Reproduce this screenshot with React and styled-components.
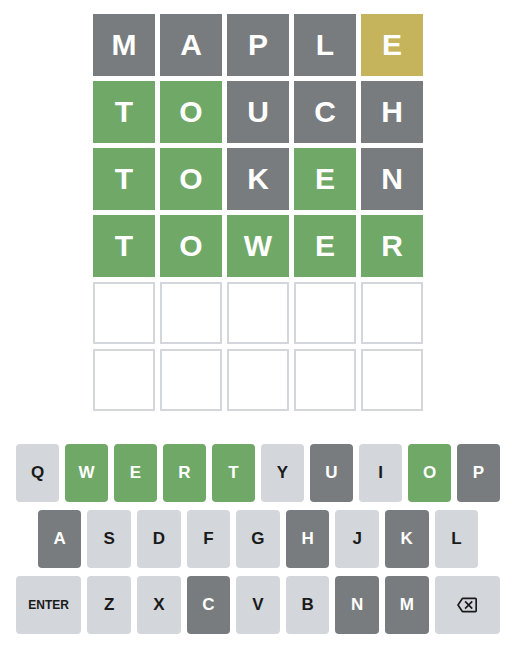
import React from "react";
import styled, { createGlobalStyle } from "styled-components";

const COLORS = {
  correct: "#70a867",
  present: "#c6b45c",
  absent: "#787c7e",
  empty: "#d3d6da",
};

const guesses = [
  ["MAPLE", "aaaap"],
  ["TOUCH", "ccaaa"],
  ["TOKEN", "ccaca"],
  ["TOWER", "ccccc"],
];

const stateOf = { c: "correct", p: "present", a: "absent" };

const keyRows = [
  "QWERTYUIOP".split(""),
  "ASDFGHJKL".split(""),
  ["ENTER", ..."ZXCVBNM".split(""), "BACK"],
];

const keyStates = {
  W: "correct", E: "correct", R: "correct", T: "correct", O: "correct",
  U: "absent", P: "absent", A: "absent", H: "absent", K: "absent",
  C: "absent", N: "absent", M: "absent",
};

const GlobalStyle = createGlobalStyle`
  body {
    margin: 0;
    background: #ffffff;
    font-family: "Liberation Sans", Arial, sans-serif;
  }
`;

const Page = styled.div`
  width: 484px;
  margin-left: 16px;
  padding-top: 14px;
  display: flex;
  flex-direction: column;
  align-items: center;
`;

const Board = styled.div`
  display: grid;
  grid-template-columns: repeat(5, 62px);
  grid-auto-rows: 62px;
  gap: 5px;
`;

const Tile = styled.div`
  box-sizing: border-box;
  display: flex;
  align-items: center;
  justify-content: center;
  font-size: 30px;
  font-weight: bold;
  color: #ffffff;
  background: ${(p) => (p.$state ? COLORS[p.$state] : "#ffffff")};
  border: ${(p) => (p.$state ? "none" : `2px solid ${COLORS.empty}`)};
`;

const Keyboard = styled.div`
  width: 100%;
  margin-top: 33px;
  display: flex;
  flex-direction: column;
  gap: 8px;
`;

const KeyRow = styled.div`
  display: flex;
`;

const Spacer = styled.div`
  flex: 0.5;
`;

const Key = styled.button`
  flex: ${(p) => (p.$wide ? 1.5 : 1)};
  height: 58px;
  margin: 0 6px 0 0;
  border: 0;
  border-radius: 4px;
  padding: 0;
  display: flex;
  align-items: center;
  justify-content: center;
  font-family: "Liberation Sans", Arial, sans-serif;
  font-weight: bold;
  font-size: ${(p) => (p.$small ? "12px" : "17px")};
  background: ${(p) => (p.$state ? COLORS[p.$state] : COLORS.empty)};
  color: ${(p) => (p.$state ? "#ffffff" : "#1a1a1b")};

  &:last-of-type {
    margin: 0;
  }
`;

const BackIcon = () => (
  <svg width="20" height="20" viewBox="0 0 24 24">
    <path
      fill="#1a1a1b"
      d="M22 3H7c-.69 0-1.23.35-1.59.88L0 12l5.41 8.11c.36.53.9.89 1.59.89h15c1.1 0 2-.9 2-2V5c0-1.1-.9-2-2-2zm0 16H7.07L2.4 12l4.66-7H22v14zm-11.59-2L14 13.41 17.59 17 19 15.59 15.41 12 19 8.41 17.59 7 14 10.59 10.41 7 9 8.41 12.59 12 9 15.59z"
    />
  </svg>
);

export default function App() {
  const rows = [];
  for (let r = 0; r < 6; r++) {
    const g = guesses[r];
    for (let c = 0; c < 5; c++) {
      rows.push(
        <Tile key={`${r}-${c}`} $state={g ? stateOf[g[1][c]] : null}>
          {g ? g[0][c] : ""}
        </Tile>
      );
    }
  }

  return (
    <>
      <GlobalStyle />
      <Page>
        <Board>{rows}</Board>
        <Keyboard>
          {keyRows.map((row, i) => (
            <KeyRow key={i}>
              {i === 1 && <Spacer />}
              {row.map((k) =>
                k === "ENTER" ? (
                  <Key key={k} $wide $small>ENTER</Key>
                ) : k === "BACK" ? (
                  <Key key={k} $wide aria-label="backspace">
                    <BackIcon />
                  </Key>
                ) : (
                  <Key key={k} $state={keyStates[k]}>{k}</Key>
                )
              )}
              {i === 1 && <Spacer />}
            </KeyRow>
          ))}
        </Keyboard>
      </Page>
    </>
  );
}
